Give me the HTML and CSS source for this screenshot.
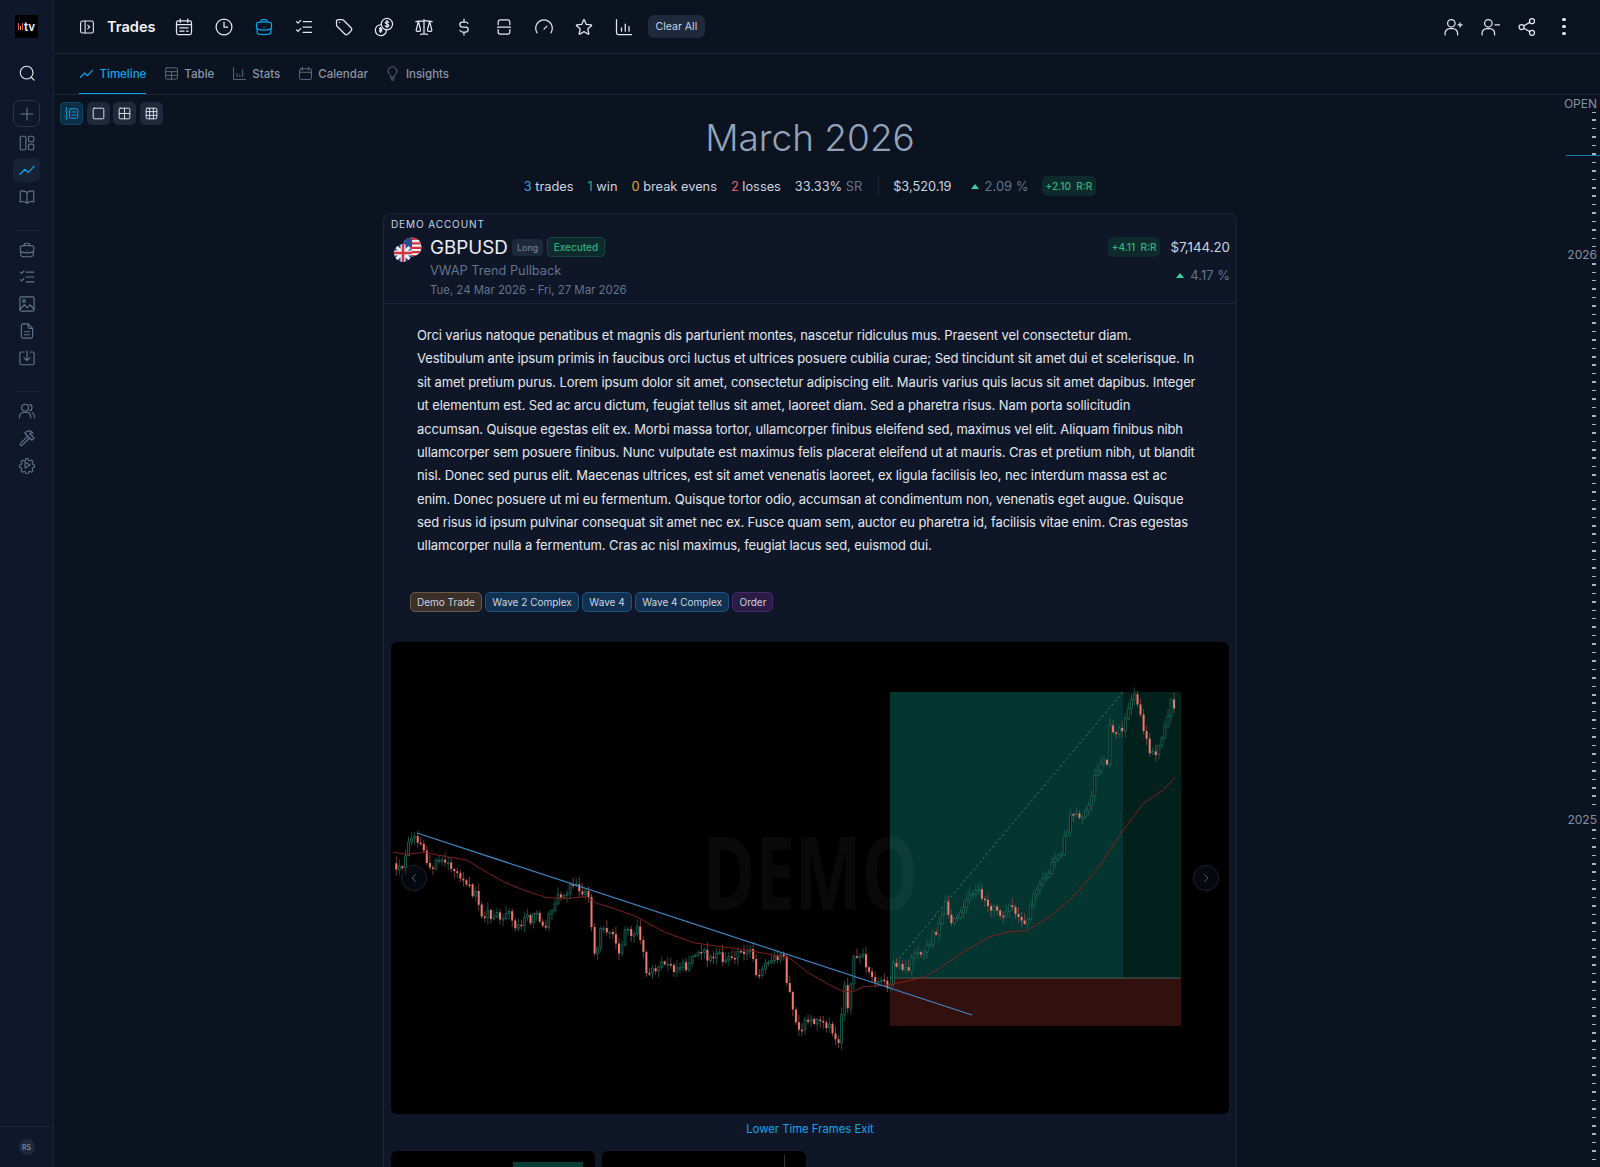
FILE: index.html
```html
<!DOCTYPE html>
<html lang="en">
<head>
    <meta charset="UTF-8">
    <title>Trades</title>
    <link rel="stylesheet" href="styles.css">
</head>
<body>
    <svg class="sprite" xmlns="http://www.w3.org/2000/svg">
        <symbol id="i-panel" viewBox="0 0 24 24"><rect x="3.5" y="4" width="17" height="16" rx="2.5"/><path d="M9.5 4v16M13 9.5l2.5 2.5-2.5 2.5"/></symbol>
        <symbol id="i-calendar" viewBox="0 0 24 24"><rect x="3" y="4.5" width="18" height="16.5" rx="2.2"/><path d="M7.5 2.5v4M16.5 2.5v4M3 9h18M7 13h10M7 17h5M15 17h2"/></symbol>
        <symbol id="i-clock" viewBox="0 0 24 24"><circle cx="12" cy="12" r="9.5"/><path d="M12 6v6h4.5"/></symbol>
        <symbol id="i-briefcase" viewBox="0 0 24 24"><path d="M20.25 14.15v4.25c0 1.094-.787 2.036-1.872 2.18-2.087.277-4.216.42-6.378.42s-4.291-.143-6.378-.42c-1.085-.144-1.872-1.086-1.872-2.18v-4.25m16.5 0a2.18 2.18 0 0 0 .75-1.661V8.706c0-1.081-.768-2.015-1.837-2.175a48.114 48.114 0 0 0-3.413-.387m4.5 8.006c-.194.165-.42.295-.673.38A23.978 23.978 0 0 1 12 15.75c-2.648 0-5.195-.429-7.577-1.22a2.016 2.016 0 0 1-.673-.38m0 0A2.18 2.18 0 0 1 3 12.489V8.706c0-1.081.768-2.015 1.837-2.175a48.111 48.111 0 0 1 3.413-.387m7.5 0V5.25A2.25 2.25 0 0 0 13.5 3h-3a2.25 2.25 0 0 0-2.25 2.25v.894m7.5 0a48.667 48.667 0 0 0-7.5 0M12 12.75h.008v.008H12v-.008Z"/></symbol>
        <symbol id="i-checks" viewBox="0 0 24 24"><path d="M11 5.5h10M11 12h10M11 18.5h10M3 5.5l1.8 1.8L8 4M3 15.5l1.8 1.8L8 14"/></symbol>
        <symbol id="i-tag" viewBox="0 0 24 24"><path d="M9.568 3H5.25A2.25 2.25 0 0 0 3 5.25v4.318c0 .597.237 1.17.659 1.591l9.581 9.581c.699.699 1.78.872 2.607.33a18.095 18.095 0 0 0 5.223-5.223c.542-.827.369-1.908-.33-2.607L11.16 3.66A2.25 2.25 0 0 0 9.568 3Z"/><path d="M6.5 6.5h.01"/></symbol>
        <symbol id="i-coins" viewBox="0 0 24 24"><circle cx="15.5" cy="8.5" r="6.8"/><path d="M17.6 6.4c-.4-.7-1.1-1-2-1-1.2 0-2 .6-2 1.5 0 2 4.2 1 4.2 3.2 0 .9-.9 1.5-2.2 1.5-.9 0-1.7-.4-2.1-1.1M15.6 4v9"/><path d="M8 9.3a6.6 6.6 0 1 0 6.8 6.8"/><path d="M9.3 13.8c-.3-.4-.8-.6-1.4-.6-.8 0-1.4.4-1.4 1 0 1.3 3 .7 3 2.1 0 .6-.6 1-1.5 1-.6 0-1.2-.2-1.5-.7M7.900 12.300v6"/></symbol>
        <symbol id="i-scale" viewBox="0 0 24 24"><path d="M12 3v17.25m0 0c-1.472 0-2.882.265-4.185.75M12 20.25c1.472 0 2.882.265 4.185.75M18.75 4.97A48.416 48.416 0 0 0 12 4.5c-2.291 0-4.545.16-6.75.47m13.5 0c1.01.143 2.01.317 3 .52m-3-.52 2.62 10.726c.122.499-.106 1.028-.589 1.202a5.988 5.988 0 0 1-2.031.352 5.988 5.988 0 0 1-2.031-.352c-.483-.174-.711-.703-.59-1.202L18.75 4.971Zm-16.5.52c.99-.203 1.99-.377 3-.52m0 0 2.62 10.726c.122.499-.106 1.028-.589 1.202a5.989 5.989 0 0 1-2.031.352 5.989 5.989 0 0 1-2.031-.352c-.483-.174-.711-.703-.59-1.202L5.25 4.971Z"/></symbol>
        <symbol id="i-dollar" viewBox="0 0 24 24"><path d="M16.7 8a3 3 0 0 0-2.7-2h-4a3 3 0 0 0 0 6h4a3 3 0 0 1 0 6h-4a3 3 0 0 1-2.7-2M12 2.5V6M12 18v3.5"/></symbol>
        <symbol id="i-split" viewBox="0 0 24 24"><path d="M4 12h16M5 9V6a2.5 2.5 0 0 1 2.5-2.5h9A2.5 2.5 0 0 1 19 6v3M5 15v3a2.5 2.5 0 0 0 2.5 2.5h9A2.5 2.5 0 0 0 19 18v-3"/></symbol>
        <symbol id="i-gauge" viewBox="0 0 24 24"><path d="M3.6 19a10 10 0 1 1 16.8 0M12 14.500l3.500-3.500"/></symbol>
        <symbol id="i-star" viewBox="0 0 24 24"><path d="M11.48 3.499a.562.562 0 0 1 1.04 0l2.125 5.111a.563.563 0 0 0 .475.345l5.518.442c.499.04.701.663.321.988l-4.204 3.602a.563.563 0 0 0-.182.557l1.285 5.385a.562.562 0 0 1-.84.61l-4.725-2.885a.562.562 0 0 0-.586 0L6.982 20.54a.562.562 0 0 1-.84-.61l1.285-5.386a.562.562 0 0 0-.182-.557l-4.204-3.602a.562.562 0 0 1 .321-.988l5.518-.442a.563.563 0 0 0 .475-.345L11.48 3.5Z"/></symbol>
        <symbol id="i-bars" viewBox="0 0 24 24"><path d="M3 3v16a2 2 0 0 0 2 2h16M9 13v4M13.5 8.5V17M18 11.5V17"/></symbol>
        <symbol id="i-user-plus" viewBox="0 0 24 24"><circle cx="10" cy="7.5" r="4.5"/><path d="M2.500 21.500v-2a5.500 5.500 0 0 1 5.500-5.500h4a5.500 5.500 0 0 1 5.500 5.500v2M18 9.500h5M20.500 7v5"/></symbol>
        <symbol id="i-user-minus" viewBox="0 0 24 24"><circle cx="10" cy="7.5" r="4.5"/><path d="M2.500 21.500v-2a5.500 5.500 0 0 1 5.500-5.500h4a5.500 5.500 0 0 1 5.500 5.500v2M18 9.500h5.500"/></symbol>
        <symbol id="i-share" viewBox="0 0 24 24"><circle cx="5.5" cy="12" r="3"/><circle cx="18" cy="5" r="3"/><circle cx="18" cy="19" r="3"/><path d="M8.2 10.500l7.200-4M8.2 13.500l7.200 4"/></symbol>
        <symbol id="i-search" viewBox="0 0 24 24"><circle cx="11.5" cy="11.5" r="8.5"/><path d="M18 18l3.5 3.5"/></symbol>
        <symbol id="i-plus" viewBox="0 0 24 24"><path d="M12 4v16M4 12h16"/></symbol>
        <symbol id="i-layout" viewBox="0 0 24 24"><rect x="3" y="3" width="7.5" height="18" rx="1.5"/><rect x="14" y="3" width="7" height="7" rx="1.5"/><rect x="14" y="13.5" width="7" height="7.5" rx="1.5"/></symbol>
        <symbol id="i-trend" viewBox="0 0 24 24"><path d="M2.5 18l6.500-7 4.500 4.500 8-8.500"/></symbol>
        <symbol id="i-book" viewBox="0 0 24 24"><path d="M12 6.042A8.967 8.967 0 0 0 6 3.750c-1.052 0-2.062.18-3 .512v14.250A8.987 8.987 0 0 1 6 18c2.305 0 4.408.867 6 2.292m0-14.250a8.966 8.966 0 0 1 6-2.292c1.052 0 2.062.18 3 .512v14.250A8.987 8.987 0 0 0 18 18a8.967 8.967 0 0 0-6 2.292m0-14.250v14.250"/></symbol>
        <symbol id="i-image" viewBox="0 0 24 24"><rect x="2.5" y="2.5" width="19" height="19" rx="2"/><circle cx="8" cy="8" r="1.8"/><path d="M2.500 19l6-6 4 4 3.500-4 5.500 6"/></symbol>
        <symbol id="i-doc" viewBox="0 0 24 24"><path d="M13.500 2.500H7A2.500 2.500 0 0 0 4.500 5v14A2.500 2.500 0 0 0 7 21.500h10a2.500 2.500 0 0 0 2.500-2.500V8.500z"/><path d="M13.500 2.500v4a2 2 0 0 0 2 2h4M8.500 13h7M8.500 17h7"/></symbol>
        <symbol id="i-inbox" viewBox="0 0 24 24"><path d="M8 4H4.500A2 2 0 0 0 2.500 6v13a2 2 0 0 0 2 2h15a2 2 0 0 0 2-2V6a2 2 0 0 0-2-2H16M12 2.500V15M8 11.500l4 4 4-4"/></symbol>
        <symbol id="i-users" viewBox="0 0 24 24"><circle cx="9.5" cy="7.5" r="4.5"/><path d="M2 21v-1.500A5.500 5.500 0 0 1 7.500 14h4a5.500 5.500 0 0 1 5.500 5.500V21M15.500 3.200a4.500 4.500 0 0 1 0 8.600M19 14.300a5.500 5.500 0 0 1 3 5.200V21"/></symbol>
        <symbol id="i-hammer" viewBox="0 0 24 24"><path d="M13 9.500L3.300 19.200a1.700 1.700 0 0 0 0 2.400h0a1.700 1.700 0 0 0 2.400 0L15.500 12"/><path d="M9 5.500l3-2.500c3-1 6-.5 8 2.500-2-.8-3.500-.7-4.500.5l6 6-3 3-8-8z"/></symbol>
        <symbol id="i-gear" viewBox="0 0 24 24"><path d="M10.300 2.500h3.400l.6 2.700 2 .9 2.400-1.400 2.300 2.400-1.400 2.300.9 2.100 2.600.6v3.300l-2.600.6-.9 2.100 1.400 2.300-2.300 2.400-2.400-1.400-2 .9-.6 2.600h-3.400l-.6-2.600-2-.9-2.400 1.400-2.300-2.400 1.400-2.300-.9-2.100-2.600-.6v-3.300l2.600-.6.9-2.100-1.400-2.300 2.300-2.400 2.400 1.400 2-.9z" transform="translate(1.200 1.200) scale(.9)"/><path d="M9.500 7.800l6.500 4.200-6.500 4.200z"/></symbol>
        <symbol id="i-table" viewBox="0 0 24 24"><rect x="2.5" y="3" width="19" height="18" rx="2"/><path d="M2.500 9h19M2.500 15h19M12 9v12"/></symbol>
        <symbol id="i-stats" viewBox="0 0 24 24"><path d="M2.500 2.500V21.500h19M8 12v5M12.500 14v3M17 6v11"/></symbol>
        <symbol id="i-cal" viewBox="0 0 24 24"><rect x="2.5" y="4.500" width="19" height="17" rx="2"/><path d="M7 2v4.500M17 2v4.500M2.500 10h19"/></symbol>
        <symbol id="i-bulb" viewBox="0 0 24 24"><path d="M9 17c0-2-1-3-2.300-4.300A7 7 0 1 1 17.300 12.700C16 14 15 15 15 17zM9.500 20h5M10.500 22.500h3"/></symbol>
        <symbol id="i-timeline" viewBox="0 0 24 24"><rect x="9" y="4.500" width="13" height="15" rx="2"/><path d="M12.500 9.500h6M12.500 14.500h6M4 2.500v3M4 10.500v3M4 18.500v3M2 8h4M2 16h4"/></symbol>
        <symbol id="i-one" viewBox="0 0 24 24"><rect x="3.5" y="3.5" width="17" height="17" rx="1.5"/></symbol>
        <symbol id="i-four" viewBox="0 0 24 24"><rect x="3.5" y="3.5" width="17" height="17" rx="1.5"/><path d="M12 3.500v17M3.500 12h17"/></symbol>
        <symbol id="i-nine" viewBox="0 0 24 24"><rect x="3.5" y="3.5" width="17" height="17" rx="1.5"/><path d="M9 3.500v17M15 3.500v17M3.500 9h17M3.500 15h17"/></symbol>
    </svg>

    <aside class="rail">
        <div class="logo"><span class="logo-bars"><i></i><i></i><i></i></span>tv</div>
        <button class="rail-btn rail-search"><svg class="icon"><use href="#i-search"/></svg></button>
        <button class="rail-btn rail-add"><svg class="icon"><use href="#i-plus"/></svg></button>
        <button class="rail-btn"><svg class="icon"><use href="#i-layout"/></svg></button>
        <button class="rail-btn active"><svg class="icon"><use href="#i-trend"/></svg></button>
        <button class="rail-btn"><svg class="icon"><use href="#i-book"/></svg></button>
        <div class="rail-sep"></div>
        <button class="rail-btn"><svg class="icon"><use href="#i-briefcase"/></svg></button>
        <button class="rail-btn"><svg class="icon"><use href="#i-checks"/></svg></button>
        <button class="rail-btn"><svg class="icon"><use href="#i-image"/></svg></button>
        <button class="rail-btn"><svg class="icon"><use href="#i-doc"/></svg></button>
        <button class="rail-btn"><svg class="icon"><use href="#i-inbox"/></svg></button>
        <div class="rail-sep"></div>
        <button class="rail-btn"><svg class="icon"><use href="#i-users"/></svg></button>
        <button class="rail-btn"><svg class="icon"><use href="#i-hammer"/></svg></button>
        <button class="rail-btn"><svg class="icon"><use href="#i-gear"/></svg></button>
        <div class="rail-foot"><span class="avatar">RS</span></div>
    </aside>

    <div class="main">
        <header class="topbar">
            <svg class="icon panel-icon"><use href="#i-panel"/></svg>
            <h1 class="page-name">Trades</h1>
            <div class="filters">
                <svg class="icon"><use href="#i-calendar"/></svg>
                <svg class="icon"><use href="#i-clock"/></svg>
                <svg class="icon on"><use href="#i-briefcase"/></svg>
                <svg class="icon"><use href="#i-checks"/></svg>
                <svg class="icon"><use href="#i-tag"/></svg>
                <svg class="icon"><use href="#i-coins"/></svg>
                <svg class="icon"><use href="#i-scale"/></svg>
                <svg class="icon"><use href="#i-dollar"/></svg>
                <svg class="icon"><use href="#i-split"/></svg>
                <svg class="icon"><use href="#i-gauge"/></svg>
                <svg class="icon"><use href="#i-star"/></svg>
                <svg class="icon"><use href="#i-bars"/></svg>
            </div>
            <button class="clear-btn">Clear All</button>
            <div class="top-actions">
                <svg class="icon"><use href="#i-user-plus"/></svg>
                <svg class="icon"><use href="#i-user-minus"/></svg>
                <svg class="icon"><use href="#i-share"/></svg>
                <span class="dots"><i></i><i></i><i></i></span>
            </div>
        </header>

        <nav class="tabs">
            <a class="tab active"><svg class="icon"><use href="#i-trend"/></svg>Timeline</a>
            <a class="tab"><svg class="icon"><use href="#i-table"/></svg>Table</a>
            <a class="tab"><svg class="icon"><use href="#i-stats"/></svg>Stats</a>
            <a class="tab"><svg class="icon"><use href="#i-cal"/></svg>Calendar</a>
            <a class="tab"><svg class="icon"><use href="#i-bulb"/></svg>Insights</a>
        </nav>

        <div class="content">
            <div class="view-toggle">
                <button class="view-btn active"><svg class="icon"><use href="#i-timeline"/></svg></button>
                <button class="view-btn"><svg class="icon"><use href="#i-one"/></svg></button>
                <button class="view-btn"><svg class="icon"><use href="#i-four"/></svg></button>
                <button class="view-btn"><svg class="icon"><use href="#i-nine"/></svg></button>
            </div>

            <div class="timeline">
                <span class="tl-label tl-open">OPEN</span>
                <span class="tl-mark"></span>
                <span class="tl-label tl-2026">2026</span>
                <span class="tl-label tl-2025">2025</span>
            </div>

            <div class="feed">
                <h2 class="month">March 2026</h2>
                <div class="summary">
                    <span class="stat"><b class="blue">3</b> trades</span>
                    <span class="stat"><b class="green">1</b> win</span>
                    <span class="stat"><b class="amber">0</b> break evens</span>
                    <span class="stat"><b class="red">2</b> losses</span>
                    <span class="stat">33.33% <em>SR</em></span>
                    <span class="summary-sep"></span>
                    <span class="stat">$3,520.19</span>
                    <span class="pct"><i class="up"></i>2.09 %</span>
                    <span class="rr">+2.10 &nbsp;R:R</span>
                </div>

                <article class="card">
                    <div class="card-head">
                        <div class="account">DEMO ACCOUNT</div>
                        <div class="head-row">
                            <svg class="flags" viewBox="0 0 30 26">
                                <defs>
                                    <clipPath id="clip-us"><circle cx="19" cy="10" r="9.5"/></clipPath>
                                    <clipPath id="clip-uk"><circle cx="10" cy="16" r="9"/></clipPath>
                                </defs>
                                <g clip-path="url(#clip-us)">
                                    <rect x="9" width="21" height="20" fill="#eef0f4"/>
                                    <path d="M9 2h21M9 6.400h21M9 10.800h21M9 15.200h21M9 19h21" stroke="#d5333f" stroke-width="2.200"/>
                                    <rect x="9" width="10" height="10" fill="#2b4a94"/>
                                </g>
                                <g clip-path="url(#clip-uk)">
                                    <rect y="6" width="20" height="20" fill="#2a4a9a"/>
                                    <path d="M0 7l20 18M20 7L0 25" stroke="#eef0f4" stroke-width="3"/>
                                    <path d="M10 6v20M0 16h20" stroke="#eef0f4" stroke-width="5"/>
                                    <path d="M10 6v20M0 16h20" stroke="#d5333f" stroke-width="2.600"/>
                                </g>
                            </svg>
                            <div class="head-main">
                                <div class="symbol-line">
                                    <span class="symbol">GBPUSD</span>
                                    <span class="chip-long">Long</span>
                                    <span class="chip-status">Executed</span>
                                </div>
                                <div class="strategy">VWAP Trend Pullback</div>
                                <div class="dates">Tue, 24 Mar 2026 - Fri, 27 Mar 2026</div>
                            </div>
                            <div class="head-side">
                                <div class="side-line">
                                    <span class="rr">+4.11 &nbsp;R:R</span>
                                    <span class="profit">$7,144.20</span>
                                </div>
                                <div class="pct"><i class="up"></i>4.17 %</div>
                            </div>
                        </div>
                    </div>

                    <p class="notes">Orci varius natoque penatibus et magnis dis parturient montes, nascetur ridiculus mus. Praesent vel consectetur diam. Vestibulum ante ipsum primis in faucibus orci luctus et ultrices posuere cubilia curae; Sed tincidunt sit amet dui et scelerisque. In sit amet pretium purus. Lorem ipsum dolor sit amet, consectetur adipiscing elit. Mauris varius quis lacus sit amet dapibus. Integer ut elementum est. Sed ac arcu dictum, feugiat tellus sit amet, laoreet diam. Sed a pharetra risus. Nam porta sollicitudin accumsan. Quisque egestas elit ex. Morbi massa tortor, ullamcorper finibus eleifend sed, maximus vel elit. Aliquam finibus nibh ullamcorper sem posuere finibus. Nunc vulputate est maximus felis placerat eleifend ut at mauris. Cras et pretium nibh, ut blandit nisl. Donec sed purus elit. Maecenas ultrices, est sit amet venenatis laoreet, ex ligula facilisis leo, nec interdum massa est ac enim. Donec posuere ut mi eu fermentum. Quisque tortor odio, accumsan at condimentum non, venenatis eget augue. Quisque sed risus id ipsum pulvinar consequat sit amet nec ex. Fusce quam sem, auctor eu pharetra id, facilisis vitae enim. Cras egestas ullamcorper nulla a fermentum. Cras ac nisl maximus, feugiat lacus sed, euismod dui.</p>

                    <div class="tags">
                        <span class="tag tag-brown">Demo Trade</span>
                        <span class="tag tag-blue">Wave 2 Complex</span>
                        <span class="tag tag-blue">Wave 4</span>
                        <span class="tag tag-blue">Wave 4 Complex</span>
                        <span class="tag tag-purple">Order</span>
                    </div>

                    <div class="shot">
                        <svg id="chart" class="chart" viewBox="391 642 838 472"></svg>
                        <button class="shot-nav shot-prev"><svg class="icon" viewBox="0 0 24 24"><path d="M15 5l-7 7 7 7"/></svg></button>
                        <button class="shot-nav shot-next"><svg class="icon" viewBox="0 0 24 24"><path d="M9 5l7 7-7 7"/></svg></button>
                    </div>
                    <div class="caption">Lower Time Frames Exit</div>

                    <div class="thumbs">
                        <div class="thumb"><span class="thumb-zone"></span></div>
                        <div class="thumb"><span class="thumb-wick"></span></div>
                    </div>
                </article>
            </div>
        </div>
    </div>
    <script src="chart.js"></script>
</body>
</html>
```

FILE: styles.css
```css
* {
    box-sizing: border-box;
}

html, body {
    margin: 0;
    padding: 0;
    height: 100%;
    overflow: hidden;
}

body {
    display: flex;
    background-color: #0b1220;
    color: #e2e8f0;
    font: 14px 'Inter', 'Liberation Sans', sans-serif;
}

button {
    border: 0;
    padding: 0;
    background: none;
    color: inherit;
    font: inherit;
}

.sprite {
    display: none;
}

.icon {
    width: 20px;
    height: 20px;
    fill: none;
    stroke: currentColor;
    stroke-width: 1.5;
    stroke-linecap: round;
    stroke-linejoin: round;
    flex: none;
}

/* left rail */
.rail {
    width: 54px;
    flex: none;
    display: flex;
    flex-direction: column;
    align-items: center;
    gap: 3px;
    background-color: #0f182a;
    border-right: 1px solid #1a2436;
    color: #64748b;
}

.logo {
    width: 23px;
    height: 23px;
    margin-top: 15px;
    background: #000;
    display: flex;
    align-items: center;
    justify-content: center;
    gap: 1px;
    color: #f1f5f9;
    font-size: 11.5px;
    font-weight: 600;
}

.logo-bars {
    display: flex;
    align-items: flex-end;
    gap: 1px;
    height: 7px;
}

.logo-bars i {
    width: 1px;
    height: 7px;
    background: #d9534f;
}

.logo-bars i:nth-child(2) {
    height: 4px;
    background: #f0a04b;
}

.rail-btn {
    width: 27px;
    height: 24px;
    display: flex;
    align-items: center;
    justify-content: center;
    border-radius: 5px;
}

.rail-btn .icon {
    width: 18px;
    height: 18px;
    stroke-width: 1.5;
}

.rail-search {
    margin-top: 20px;
    color: #e2e8f0;
}

.rail-add {
    height: 27px;
    margin-top: 12px;
    margin-bottom: 1px;
    border: 1px solid #2a3648;
    border-radius: 7px;
}

.rail-btn.active {
    background-color: #172235;
    color: #0ea5e9;
}

.rail-sep {
    width: 27px;
    height: 1px;
    margin: 18px 0 4px;
    background-color: #1a2436;
}

.rail-foot {
    margin-top: auto;
    width: 100%;
    height: 41px;
    border-top: 1px solid #1a2436;
    display: flex;
    align-items: center;
    justify-content: center;
}

.avatar {
    width: 16px;
    height: 16px;
    border-radius: 50%;
    background-color: #1e293b;
    color: #94a3b8;
    font-size: 7px;
    display: flex;
    align-items: center;
    justify-content: center;
}

/* top bar and tabs */
.main {
    flex: 1;
    min-width: 0;
    display: flex;
    flex-direction: column;
}

.topbar {
    height: 54px;
    flex: none;
    display: flex;
    align-items: center;
    padding-left: 24px;
    border-bottom: 1px solid #1a2436;
    color: #e2e8f0;
}

.panel-icon {
    width: 18px;
    height: 18px;
}

.page-name {
    margin: 0 18px 0 11px;
    font-size: 14.6px;
    font-weight: 600;
    color: #f1f5f9;
}

.filters {
    display: flex;
    gap: 20px;
}

.filters .on {
    color: #0ea5e9;
}

.clear-btn {
    height: 23px;
    margin-left: 14px;
    padding: 0 8px;
    border-radius: 6px;
    background-color: #1e293b;
    color: #cbd5e1;
    font-size: 10.5px;
    font-weight: 400;
}

.top-actions {
    margin-left: auto;
    margin-right: 26px;
    display: flex;
    align-items: center;
    gap: 17px;
}

.dots {
    width: 20px;
    display: flex;
    flex-direction: column;
    align-items: center;
    gap: 3.5px;
}

.dots i {
    width: 3.5px;
    height: 3.5px;
    border-radius: 50%;
    background: #e2e8f0;
}

.tabs {
    height: 41px;
    flex: none;
    display: flex;
    padding-left: 25px;
    gap: 17.5px;
    border-bottom: 1px solid #1a2436;
    color: #8a97aa;
    font-size: 11.5px;
    font-weight: 500;
}

.tab {
    height: 40px;
    padding-bottom: 1px;
    display: flex;
    align-items: center;
    gap: 5.5px;
}

.tab .icon {
    width: 15px;
    height: 15px;
    stroke-width: 1.4;
    color: #64748b;
}

.tab.active {
    color: #0ea5e9;
    box-shadow: inset 0 -1px 0 #0ea5e9;
}

.tab.active .icon {
    color: #0ea5e9;
    stroke-width: 2;
}

/* content */
.content {
    position: relative;
    flex: 1;
    min-height: 0;
    overflow: hidden;
}

.view-toggle {
    position: absolute;
    left: 6px;
    top: 7px;
    display: flex;
    gap: 3.5px;
}

.view-btn {
    width: 23px;
    height: 23px;
    display: flex;
    align-items: center;
    justify-content: center;
    border-radius: 5px;
    background-color: #1e293b;
    color: #e2e8f0;
}

.view-btn .icon {
    width: 15px;
    height: 15px;
}

.view-btn.active {
    background-color: #0c2f48;
    color: #0ea5e9;
    box-shadow: inset 0 0 0 1px #0f4463;
}

.timeline {
    position: absolute;
    top: 0;
    right: 0;
    bottom: 0;
    width: 40px;
    color: #8491a5;
    font-size: 12px;
}

.timeline::before {
    content: "";
    position: absolute;
    top: 16px;
    right: 4px;
    bottom: 0;
    width: 4px;
    background: repeating-linear-gradient(to bottom, #aab4c2 0, #aab4c2 1.5px, transparent 1.5px, transparent 8.45px);
}

.tl-label {
    position: absolute;
    right: 2px;
    padding: 0 1px;
    background-color: #0b1220;
    line-height: 16px;
}

.tl-open {
    top: 1px;
}

.tl-2026 {
    top: 152px;
}

.tl-2025 {
    top: 717px;
}

.tl-mark {
    position: absolute;
    top: 60px;
    right: 0;
    width: 34px;
    height: 1px;
    background-color: #0e7fb5;
}

.feed {
    width: 854px;
    margin-left: 329px;
    display: flex;
    flex-direction: column;
    align-items: center;
}

.month {
    margin: 19px 0 0;
    font-size: 37px;
    line-height: 48px;
    font-weight: 300;
    color: #94a3b8;
}

.summary {
    height: 24px;
    margin-top: 12px;
    display: flex;
    align-items: center;
    color: #cbd5e1;
    font-size: 12.8px;
}

.stat {
    margin-right: 14px;
}

.stat b {
    font-weight: 400;
}

.stat em {
    font-style: normal;
    color: #64748b;
}

.blue { color: #38a3d8; }
.green { color: #22b07d; }
.amber { color: #e0a82e; }
.red { color: #e5636b; }

.summary-sep {
    width: 1px;
    height: 20px;
    margin: 0 14px 0 2px;
    background-color: #1a2436;
}

.pct {
    color: #64748b;
    display: inline-flex;
    align-items: center;
    font-size: 13px;
}

.up {
    width: 0;
    height: 0;
    margin-right: 6px;
    border-left: 4.5px solid transparent;
    border-right: 4.5px solid transparent;
    border-bottom: 5px solid #34d399;
}

.summary .stat + .pct {
    margin-left: 5px;
    margin-right: 13px;
}

.rr {
    padding: 0 4px;
    height: 20px;
    line-height: 20px;
    border-radius: 5px;
    background-color: #0f2a2c;
    color: #2fb67c;
    font-size: 10px;
    font-weight: 500;
}

.card {
    width: 100%;
    margin-top: 15px;
    background-color: #0e1628;
    border: 1px solid #1a2436;
    border-bottom: 0;
    border-radius: 8px 8px 0 0;
}

.card-head {
    height: 90px;
    padding: 4px 6px 0 7px;
    border-bottom: 1px solid #1a2436;
}

.account {
    font-size: 10px;
    line-height: 13px;
    letter-spacing: 0.9px;
    color: #cbd5e1;
}

.head-row {
    display: flex;
    margin-top: 4px;
}

.flags {
    width: 30px;
    height: 26px;
    margin: 2px 7px 0 2px;
    flex: none;
}

.symbol-line {
    display: flex;
    align-items: center;
    gap: 4px;
    height: 24px;
}

.symbol {
    font-size: 18.8px;
    color: #e8edf4;
}

.chip-long {
    height: 17px;
    line-height: 17px;
    padding: 0 5px;
    border-radius: 4px;
    background-color: #1e293b;
    color: #7b899d;
    font-size: 9px;
}

.chip-status {
    height: 20px;
    line-height: 18px;
    padding: 0 5.5px;
    border: 1px solid #17473f;
    border-radius: 4px;
    background-color: #0f2a2c;
    color: #22b07d;
    font-size: 10px;
    font-weight: 500;
}

.strategy {
    margin-top: 3px;
    font-size: 12.8px;
    line-height: 18px;
    color: #64748b;
}

.dates {
    margin-top: 2px;
    font-size: 11.4px;
    line-height: 17px;
    color: #64748b;
}

.head-side {
    margin-left: auto;
    display: flex;
    flex-direction: column;
    align-items: flex-end;
}

.side-line {
    display: flex;
    align-items: center;
    gap: 10px;
    height: 24px;
}

.profit {
    font-size: 13.3px;
    color: #cbd5e1;
}

.head-side .pct {
    margin-top: 8px;
}

.notes {
    margin: 20px 40px 0 33px;
    font-size: 13px;
    line-height: 23.37px;
    letter-spacing: -0.1px;
    color: #e2e8f0;
}

.tags {
    display: flex;
    gap: 3.5px;
    margin: 34px 0 0 26px;
}

.tag {
    height: 20px;
    line-height: 18px;
    padding: 0 6px;
    border: 1px solid;
    border-radius: 5px;
    color: #cbd5e1;
    font-size: 10px;
    font-weight: 400;
}

.tag-brown {
    background-color: #3a3029;
    border-color: #6e5a44;
}

.tag-blue {
    background-color: #12304f;
    border-color: #1e5382;
}

.tag-purple {
    background-color: #2a1c45;
    border-color: #44296e;
}

.shot {
    position: relative;
    height: 472px;
    margin: 30px 7px 0;
    border-radius: 6px;
    background: #000;
    overflow: hidden;
}

.chart {
    display: block;
    width: 100%;
    height: 100%;
}

.shot-nav {
    position: absolute;
    top: 223px;
    width: 26px;
    height: 26px;
    display: flex;
    align-items: center;
    justify-content: center;
    border: 1px solid #1a2333;
    border-radius: 50%;
    background-color: rgba(15, 23, 42, 0.35);
    color: #64748b;
}

.shot-nav .icon {
    width: 12px;
    height: 12px;
}

.shot-prev {
    left: 10px;
}

.shot-next {
    right: 10px;
}

.caption {
    margin-top: 8px;
    text-align: center;
    line-height: 15px;
    color: #0ea5e9;
    font-size: 11.3px;
}

.thumbs {
    display: flex;
    gap: 7px;
    margin: 14px 7px 0;
}

.thumb {
    position: relative;
    width: 204px;
    height: 120px;
    border-radius: 6px 6px 0 0;
    background: #000;
}

.thumb-zone {
    position: absolute;
    top: 11px;
    left: 122px;
    width: 70px;
    height: 109px;
    background-color: #073d35;
}

.thumb-wick {
    position: absolute;
    top: 4px;
    left: 182px;
    width: 1px;
    height: 116px;
    background-color: #2a3a38;
}
```

FILE: chart.js
```js
// trade screenshot: candles are built from a traced price path
const zones = `
    <rect x="890" y="692" width="233" height="286" fill="#053530"/>
    <rect x="1123" y="692" width="58" height="286" fill="#03211c"/>
    <rect x="890" y="978" width="291" height="48" fill="#32100e"/>
    <rect x="890" y="977.5" width="291" height="1" fill="#4d5f55"/>
    <text x="703" y="910" textLength="215" lengthAdjust="spacingAndGlyphs" font-family="Open Sans" font-weight="700" font-size="103" fill="#fff" fill-opacity=".035">DEMO</text>`;

// [x, y] read off the reference crops, left part then right part
const left = [[40,190],[70,210],[85,130],[110,110],[130,150],[145,225],[170,185],[205,180],[240,240],[290,290],[300,345],[345,340],[360,375],[385,345],[410,385],[470,340],[495,375],[515,320],[560,270],[580,250],[600,285],[630,285],[640,490],[660,400],[680,380],[720,460],[735,400],[775,390],[800,510],[820,520],[845,490],[870,500],[900,510],[940,480],[975,450],[985,490],[1015,435],[1030,480],[1080,465],[1115,460],[1130,540],[1175,470],[1210,480],[1240,640],[1260,690],[1280,660],[1340,670],[1375,720],[1395,560],[1405,620],[1420,480],[1445,460],[1470,530]]
    .map(p => [380 + p[0] / 3, 800 + p[1] / 3]);
const right = [[50,910],[100,940],[120,940],[130,890],[175,890],[190,855],[220,865],[255,790],[290,700],[300,760],[330,720],[345,690],[390,670],[420,710],[465,750],[480,710],[520,775],[540,730],[555,660],[600,590],[630,560],[665,430],[685,420],[695,460],[720,380],[745,290],[775,280],[770,160],[790,190],[820,180],[850,60],[865,130],[885,190],[905,260],[935,220],[965,70],[975,130]]
    .map(p => [850 + p[0] / 3, 670 + p[1] / 3]);
const path = left.concat(right);

const avgLeft = [[40,157],[80,163],[130,157],[200,170],[260,180],[300,205],[370,245],[430,270],[500,293],[560,295],[620,290],[650,310],[700,325],[770,350],[850,395],[940,428],[1000,437],[1100,450],[1180,465],[1230,475],[1280,515],[1340,550],[1390,575],[1420,575],[1450,560],[1520,555]]
    .map(p => [380 + p[0] / 3, 800 + p[1] / 3]);
const avgRight = [[190,930],[230,918],[290,880],[350,840],[420,800],[480,785],[530,782],[600,740],[670,680],[740,600],[820,480],[880,400],[940,360],[975,322]]
    .map(p => [850 + p[0] / 3, 670 + p[1] / 3]);
const avg = avgLeft.concat(avgRight);

function priceAt(x) {
    for (let i = 1; i < path.length; i++) {
        if (x <= path[i][0]) {
            const a = path[i - 1], b = path[i];
            return a[1] + (b[1] - a[1]) * (x - a[0]) / (b[0] - a[0] || 1);
        }
    }
    return path[path.length - 1][1];
}

// fixed noise so every render gives the same chart
let seed = 17;
function noise() {
    seed = (seed * 9301 + 49297) % 233280;
    return seed / 233280 - 0.5;
}

function candles() {
    let green = "", red = "", wicks = "", wicksRed = "";
    let prev = priceAt(path[0][0]);
    for (let x = path[0][0] + 3; x < 1177; x += 3.05) {
        const close = priceAt(x) + noise() * 11;
        const top = Math.min(prev, close), h = Math.max(Math.abs(close - prev), 1.5);
        const wickTop = top - 1 - Math.abs(noise()) * 14;
        const wickBot = top + h + 1 + Math.abs(noise()) * 12;
        const wick = `M${x.toFixed(1)} ${wickTop.toFixed(1)}V${wickBot.toFixed(1)}`;
        const body = `M${(x - 1).toFixed(1)} ${top.toFixed(1)}h2v${h.toFixed(1)}h-2z`;
        if (close > prev) {
            red += body;
            wicksRed += wick;
        } else {
            green += body;
            wicks += wick;
        }
        prev = close;
    }
    return `<path d="${wicks}" stroke="#1a6355" stroke-width=".8" fill="none"/>
        <path d="${green}" fill="#020d0b" stroke="#1f7a68" stroke-width=".7"/>
        <path d="${wicksRed}" stroke="#8d4743" stroke-width=".8" fill="none"/>
        <path d="${red}" fill="#f2786f"/>`;
}

function line(points, color, width) {
    return `<polyline points="${points.map(p => p.join(",")).join(" ")}" fill="none" stroke="${color}" stroke-width="${width}"/>`;
}

document.getElementById("chart").innerHTML = zones
    + `<path d="M893 966L1123 692" stroke="#5d8f84" stroke-width=".8" stroke-dasharray="2 3"/>`
    + candles()
    + line(avg, "#7f1f1b", 1)
    + line([[417, 833], [972, 1015]], "#3f86c4", 1.2);
```
